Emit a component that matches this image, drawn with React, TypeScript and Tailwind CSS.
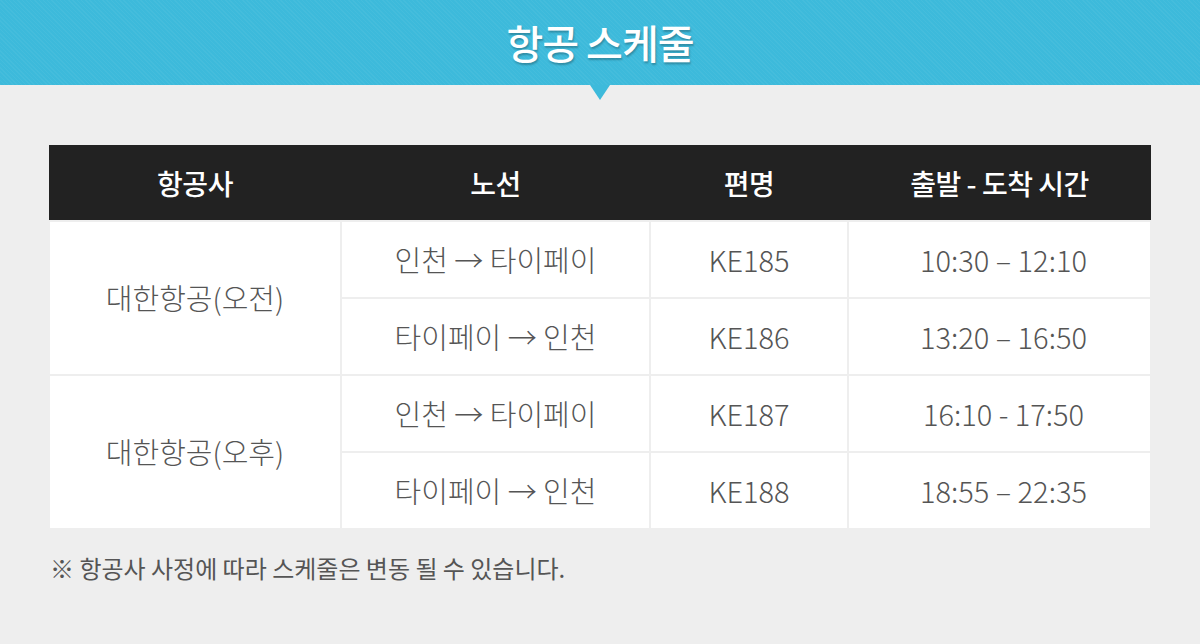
const rows = [
  { airline: "대한항공(오전)", flights: [
    { route: "인천 → 타이페이", no: "KE185", time: "10:30 – 12:10" },
    { route: "타이페이 → 인천", no: "KE186", time: "13:20 – 16:50" },
  ] },
  { airline: "대한항공(오후)", flights: [
    { route: "인천 → 타이페이", no: "KE187", time: "16:10 - 17:50" },
    { route: "타이페이 → 인천", no: "KE188", time: "18:55 – 22:35" },
  ] },
];

const font = { fontFamily: '"Noto Sans CJK KR", "Noto Sans", sans-serif' };

export default function App() {
  return (
    <div className="w-[1200px] h-[644px] bg-[#eeeeee] overflow-hidden" style={font}>
      <div className="relative h-[85px] bg-[#3dbadb] bg-[repeating-linear-gradient(45deg,rgba(255,255,255,0.04)_0px,rgba(255,255,255,0.04)_1px,transparent_1px,transparent_3px)] flex items-center justify-center">
        <h1 className="text-[40px] font-medium text-white tracking-[-1px] [text-shadow:1px_2px_2px_rgba(0,0,0,0.25)] leading-none pb-[2px]">항공 스케줄</h1>
        <div className="absolute left-[590px] top-[85px] w-0 h-0 border-l-[10px] border-r-[10px] border-t-[15px] border-l-transparent border-r-transparent border-t-[#3dbadb]"></div>
      </div>

      <div className="mx-[50px] mt-[60px] grid grid-cols-[290px_307px_196px_301px] gap-[2px] bg-[#eeeeee]">
        {["항공사", "노선", "편명", "출발 - 도착 시간"].map((h) => (
          <div key={h} className="h-[75px] bg-[#222222] -mx-[1px] px-[1px] flex items-center justify-center text-white text-[28px] font-medium tracking-[-0.5px]">
            {h}
          </div>
        ))}
        {rows.map((r) => (
          <div key={r.airline} className="contents">
            <div className="row-span-2 bg-white flex items-center justify-center text-[#555555] text-[29px] font-light">{r.airline}</div>
            {r.flights.map((f) => (
              <div key={f.no} className="contents">
                <div className="h-[75px] bg-white flex items-center justify-center text-[#555555] text-[29px] font-light">{f.route}</div>
                <div className="h-[75px] bg-white flex items-center justify-center text-[#555555] text-[29px] font-light">{f.no}</div>
                <div className="h-[75px] bg-white flex items-center justify-center text-[#555555] text-[29px] font-light pl-[8px]">{f.time}</div>
              </div>
            ))}
          </div>
        ))}
      </div>

      <p className="mx-[50px] mt-[22px] text-[24px] font-normal text-[#555555]">※ 항공사 사정에 따라 스케줄은 변동 될 수 있습니다.</p>
    </div>
  );
}
